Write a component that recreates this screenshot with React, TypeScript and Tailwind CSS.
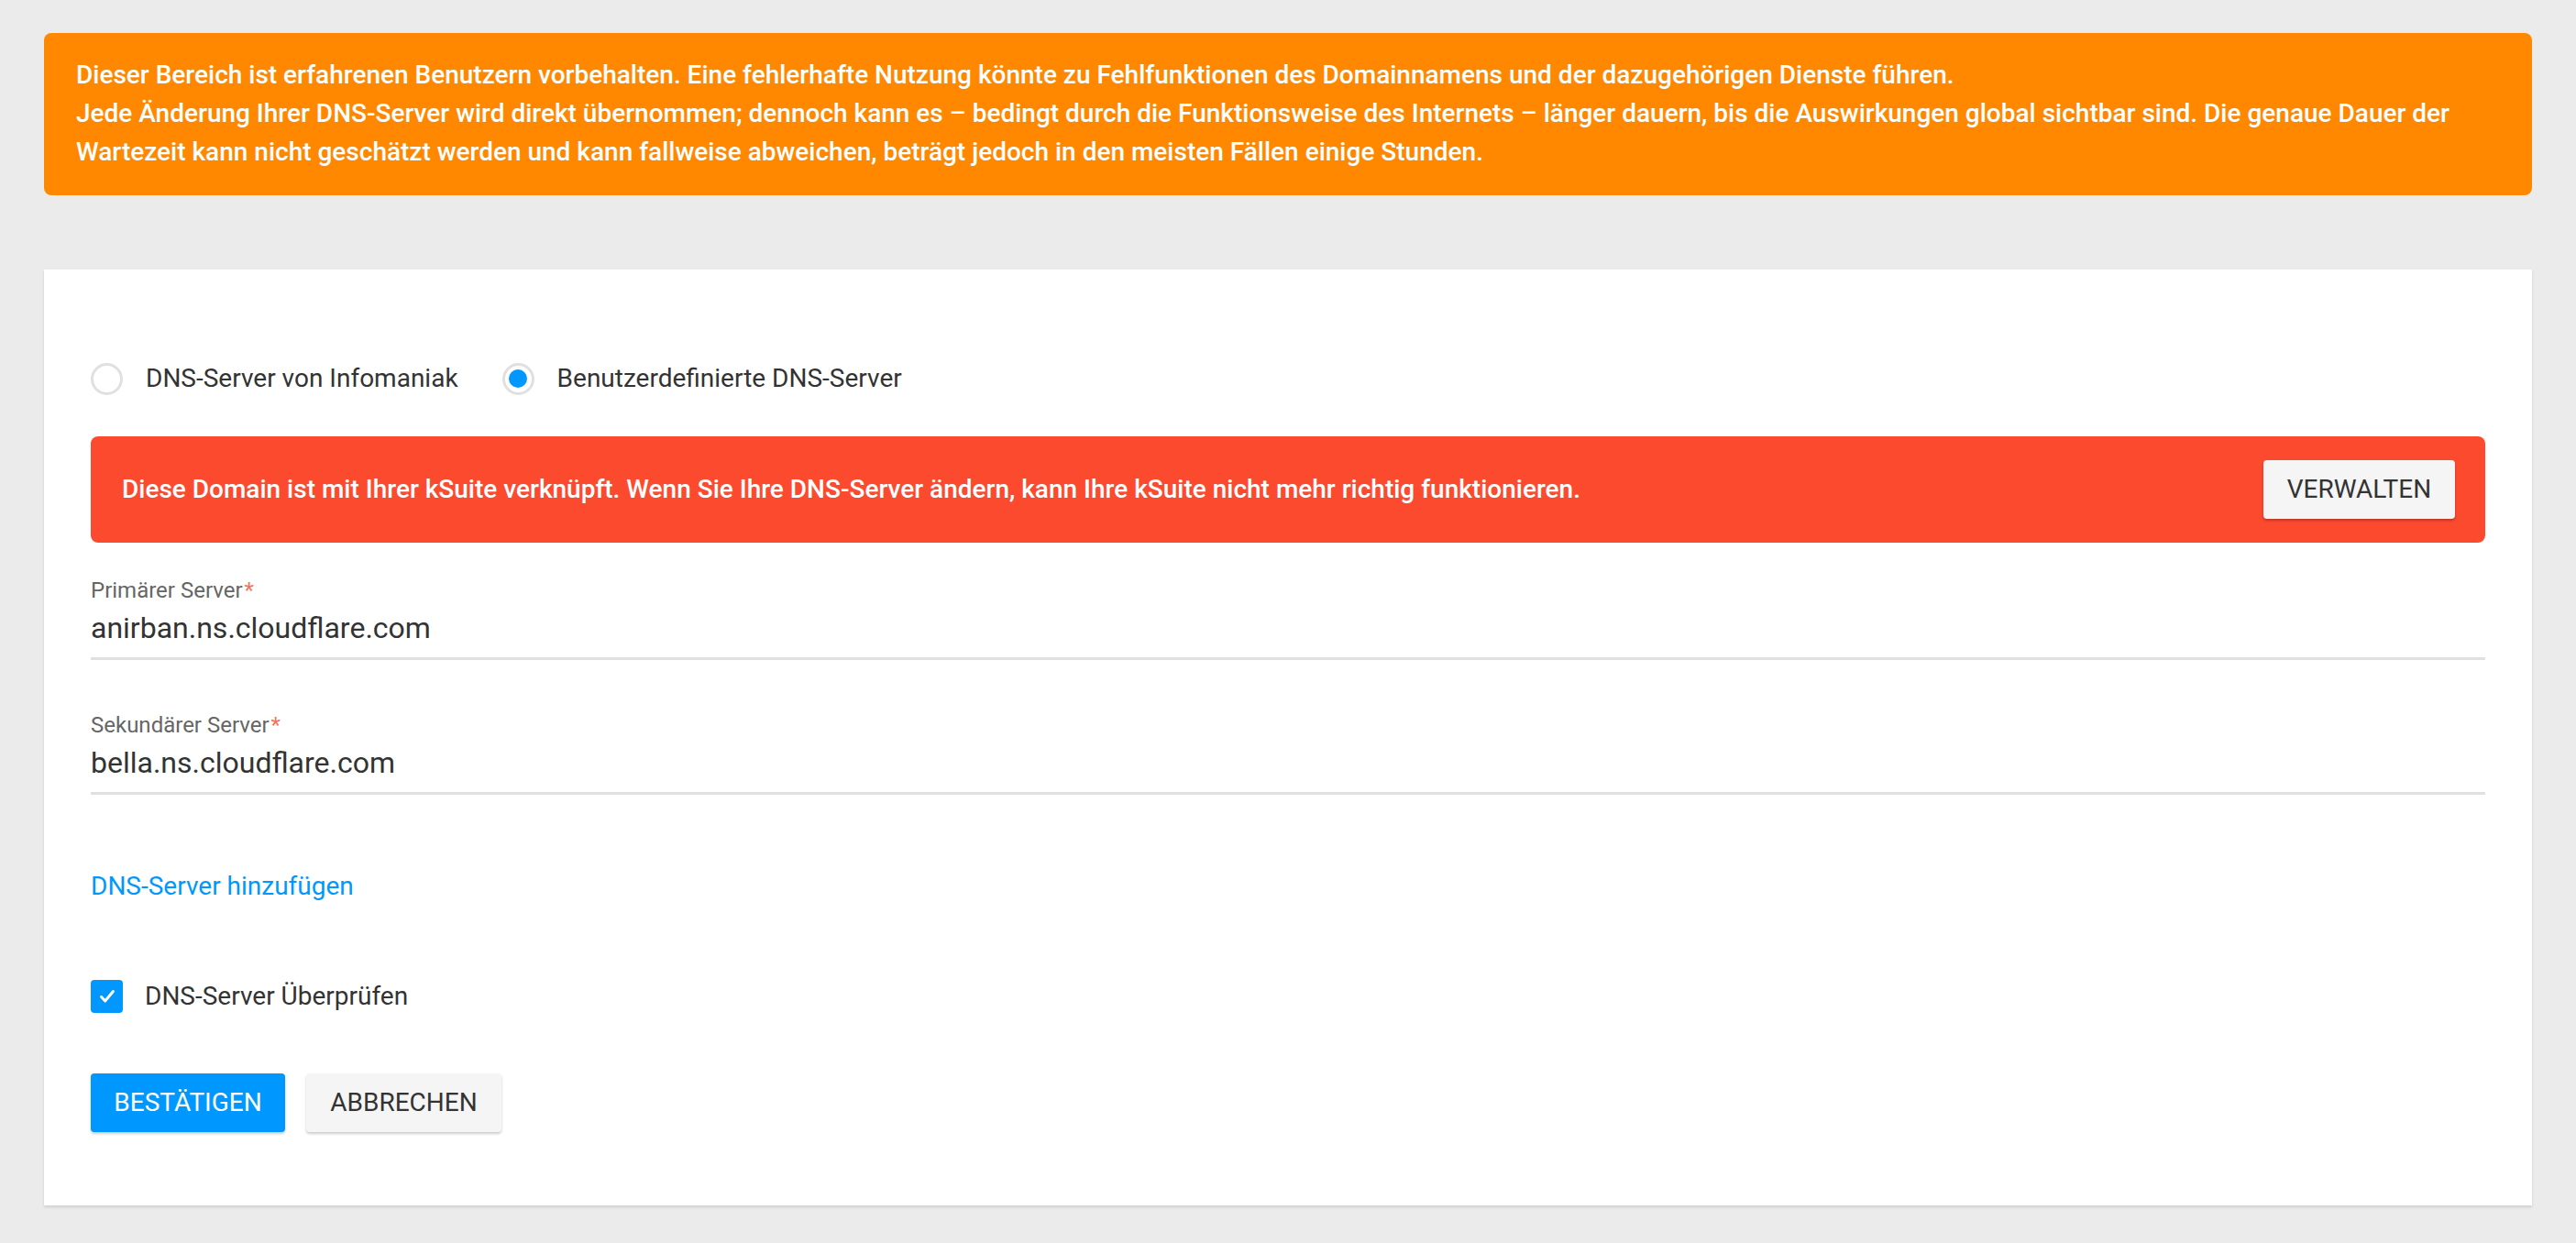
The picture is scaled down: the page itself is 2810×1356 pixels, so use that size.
import React, { useState } from 'react';

function Radio({ checked, label, onClick }: { checked: boolean; label: string; onClick: () => void }) {
    return (
        <label onClick={onClick} className="flex items-center gap-[25px] cursor-pointer">
            <span className="w-[35px] h-[35px] rounded-full border-[3px] border-[#e0e0e0] flex items-center justify-center">
                {checked && <span className="w-[20px] h-[20px] rounded-full bg-[#0098ff]" />}
            </span>
            <span className="text-[28px] text-[#333]">{label}</span>
        </label>
    );
}

function Field({ label, value }: { label: string; value: string }) {
    return (
        <div>
            <div className="text-[24px] leading-[28px] text-[#666]">
                {label}
                <span className="text-[#f3735a] ml-[2px]">*</span>
            </div>
            <div className="mt-[7px] pb-[12px] border-b-[3px] border-[#e0e0e0] text-[32px] leading-[40px] text-[#333]">
                {value}
            </div>
        </div>
    );
}

export default function App() {
    const [mode, setMode] = useState<'infomaniak' | 'custom'>('custom');
    const [verify, setVerify] = useState(true);

    return (
        <div className="min-h-[1356px] bg-[#ebebeb] px-[48px] pt-[36px] pb-[40px] font-['Roboto','Liberation_Sans',sans-serif]">
            {/* Warning banner */}
            <div className="bg-[#ff8800] rounded-lg pl-[35px] pr-[35px] pt-[25px] pb-[26px] text-white font-medium text-[28px] leading-[42px]">
                Dieser Bereich ist erfahrenen Benutzern vorbehalten. Eine fehlerhafte Nutzung könnte zu Fehlfunktionen des Domainnamens und der dazugehörigen Dienste führen.
                <br />
                Jede Änderung Ihrer DNS-Server wird direkt übernommen; dennoch kann es – bedingt durch die Funktionsweise des Internets – länger dauern, bis die Auswirkungen global sichtbar sind. Die genaue Dauer der Wartezeit kann nicht geschätzt werden und kann fallweise abweichen, beträgt jedoch in den meisten Fällen einige Stunden.
            </div>

            {/* Form card */}
            <div className="mt-[81px] bg-white shadow-[0_2px_3px_rgba(0,0,0,0.12)] px-[51px] pt-[99px] pb-[80px]">
                <div className="h-[40px] flex items-center gap-[48px]">
                    <Radio checked={mode === 'infomaniak'} label="DNS-Server von Infomaniak" onClick={() => setMode('infomaniak')} />
                    <Radio checked={mode === 'custom'} label="Benutzerdefinierte DNS-Server" onClick={() => setMode('custom')} />
                </div>

                <div className="mt-[43px] h-[116px] bg-[#fc4a2f] rounded-lg pl-[34px] pr-[33px] flex items-center justify-between">
                    <span className="text-white font-medium text-[28px]">
                        Diese Domain ist mit Ihrer kSuite verknüpft. Wenn Sie Ihre DNS-Server ändern, kann Ihre kSuite nicht mehr richtig funktionieren.
                    </span>
                    <button className="w-[209px] h-[64px] bg-[#f5f5f5] rounded-[4px] shadow-[0_2px_3px_rgba(0,0,0,0.25)] text-[28px] text-[#333] uppercase">
                        Verwalten
                    </button>
                </div>

                <div className="mt-[38px]">
                    <Field label="Primärer Server" value="anirban.ns.cloudflare.com" />
                </div>
                <div className="mt-[57px]">
                    <Field label="Sekundärer Server" value="bella.ns.cloudflare.com" />
                </div>

                <div className="mt-[80px] text-[28px] leading-[40px] text-[#0098ff] cursor-pointer">
                    DNS-Server hinzufügen
                </div>

                <label onClick={() => setVerify(!verify)} className="mt-[80px] h-[40px] flex items-center gap-[24px] cursor-pointer">
                    <span className={`w-[35px] h-[36px] rounded-[4px] flex items-center justify-center ${verify ? 'bg-[#0098ff]' : 'border-[3px] border-[#e0e0e0]'}`}>
                        {verify && (
                            <svg width="22" height="22" viewBox="0 0 24 24" fill="none" stroke="white" strokeWidth="3.2" strokeLinecap="round" strokeLinejoin="round">
                                <path d="M5 12.5l4.5 5L19 6" />
                            </svg>
                        )}
                    </span>
                    <span className="text-[28px] text-[#333]">DNS-Server Überprüfen</span>
                </label>

                <div className="mt-[64px] flex gap-[23px]">
                    <button className="w-[212px] h-[64px] bg-[#0098ff] rounded-[4px] shadow-[0_2px_3px_rgba(0,0,0,0.2)] text-[28px] text-white uppercase">
                        Bestätigen
                    </button>
                    <button className="w-[213px] h-[64px] bg-[#f5f5f5] rounded-[4px] shadow-[0_2px_3px_rgba(0,0,0,0.2)] text-[28px] text-[#333] uppercase">
                        Abbrechen
                    </button>
                </div>
            </div>
        </div>
    );
}
